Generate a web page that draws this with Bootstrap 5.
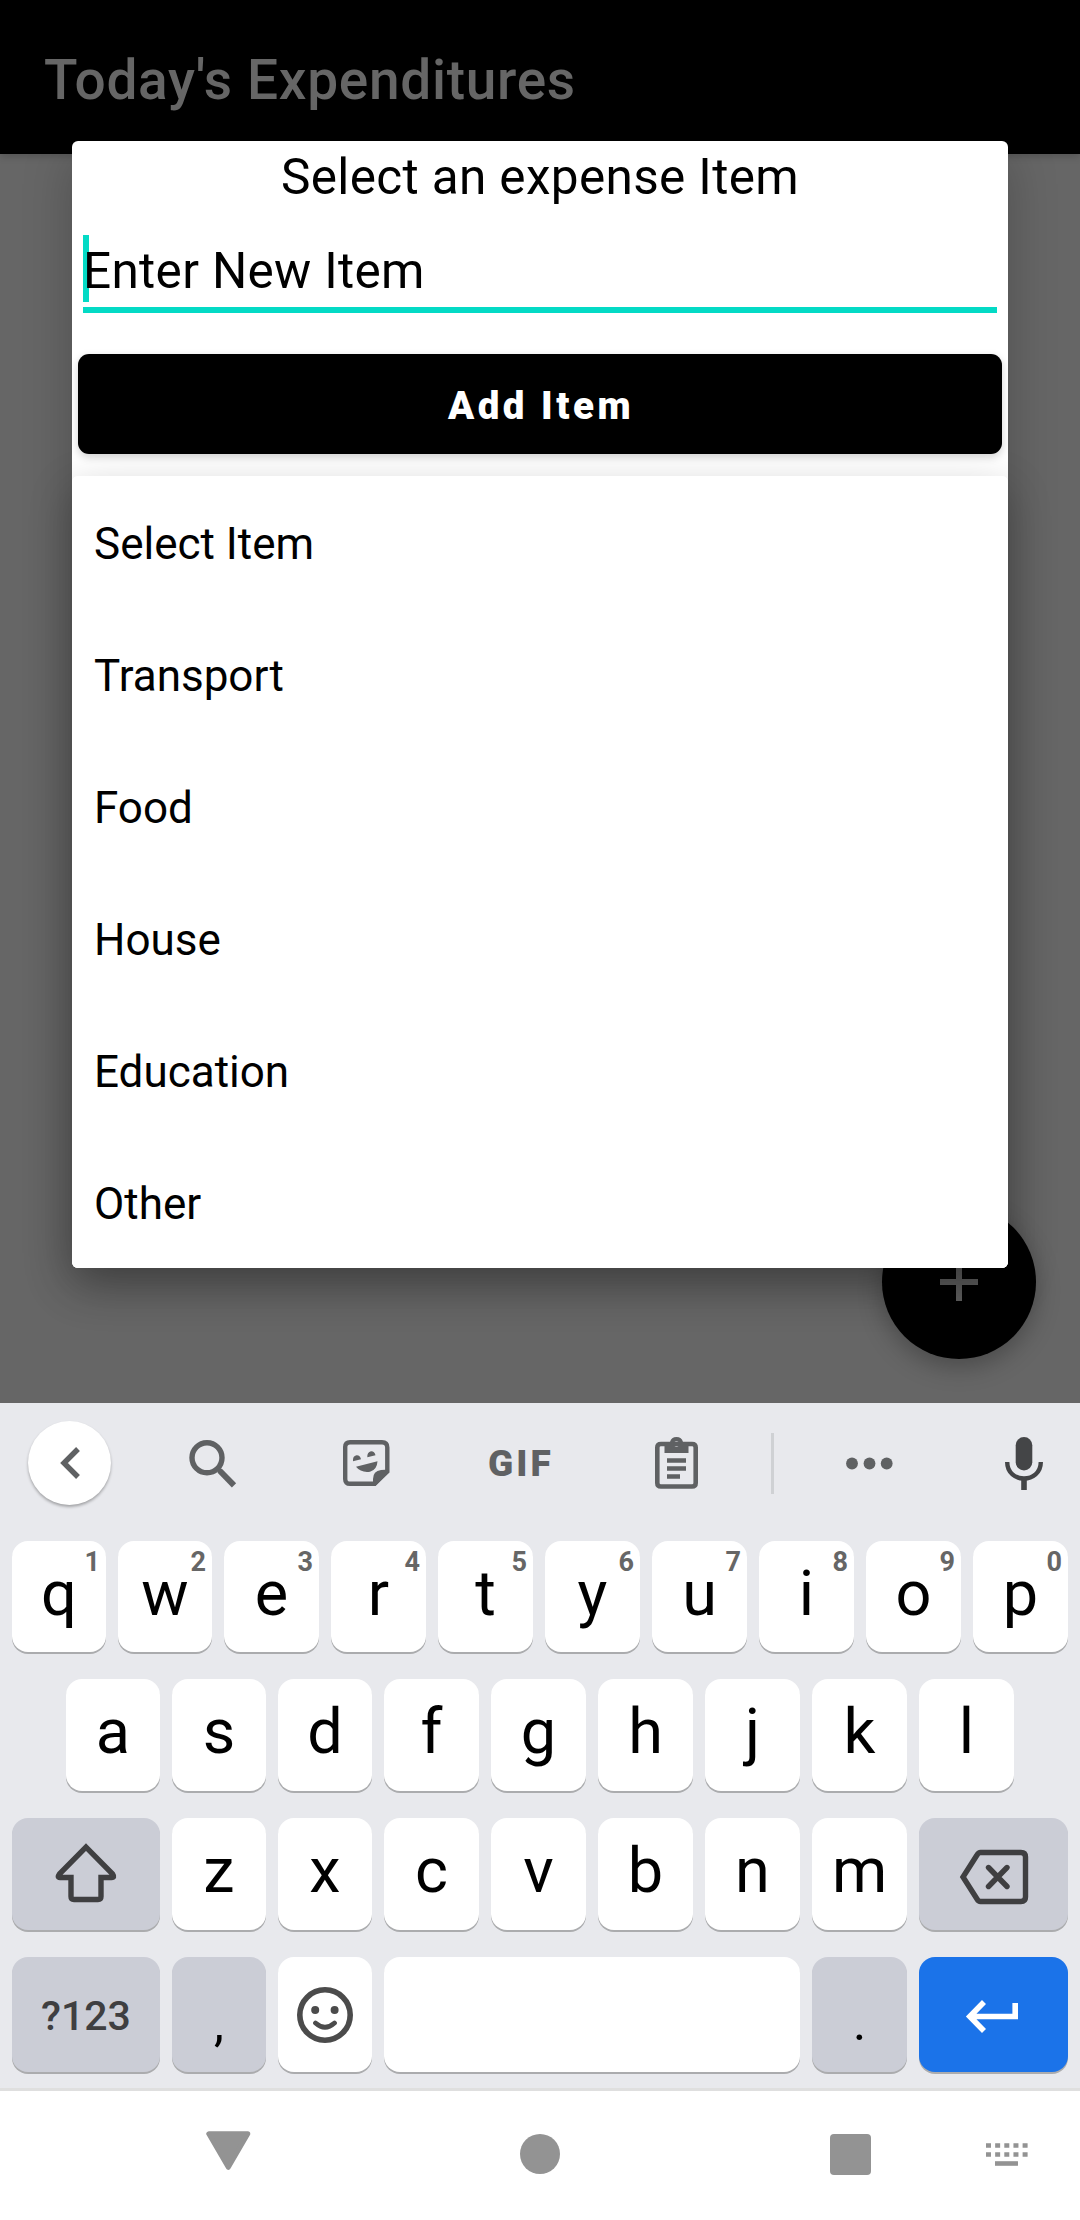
<!DOCTYPE html>
<html lang="en">
<head>
<meta charset="utf-8">
<meta name="viewport" content="width=device-width, initial-scale=1">
<title>Today's Expenditures</title>
<link href="https://cdn.jsdelivr.net/npm/bootstrap@5.3.0/dist/css/bootstrap.min.css" rel="stylesheet">
<style>
  body { font-family: Roboto, "Liberation Sans", sans-serif; color: #000; line-height: 1; overflow: hidden; }
  svg { display: block; flex: none; overflow: visible; }
  .phone { width: 1080px; height: 2220px; }
  .app-area { height: 1403px; background: #666; }
  .topbar { height: 154px; background: #000; padding: 6px 0 0 44px; box-shadow: 0 2px 8px rgba(0,0,0,.2); }
  .topbar-title { font-size: 55px; font-weight: 500; color: #666; letter-spacing: .7px; line-height: 60px; white-space: nowrap; }
  .fab { left: 882px; top: 1205px; width: 154px; height: 154px; background: #000; box-shadow: 0 8px 24px rgba(0,0,0,.28); }
  .dialog-box { left: 72px; top: 141px; width: 936px; height: 1127px; border-radius: 6px; box-shadow: 0 14px 50px rgba(0,0,0,.23); }
  .dialog-heading { font-size: 49.5px; line-height: 58px; padding-top: 7px; letter-spacing: .35px; }
  .entry { margin: 29px 11px 0; height: 78px; border-bottom: 6px solid #03dac5; font-size: 49.5px; line-height: 73px; letter-spacing: .32px; white-space: nowrap; }
  .caret { left: 0; top: 0; width: 6px; height: 67px; background: #03dac5; }
  .btn-add { margin: 41px 6px 22px; height: 100px; border-radius: 11px; background: #000; color: #fff; font-size: 38.5px; font-weight: 900; letter-spacing: 3.5px; line-height: 1; box-shadow: 0 3px 8px rgba(0,0,0,.18); padding: 4px 0 0 2px; border: 0; }
  .dropdown-panel { border-radius: 6px; box-shadow: 0 14px 44px rgba(0,0,0,.24); background: #fff; }
  .choice { height: 132px; padding: 4px 22px 0; font-size: 44px; border: 0; color: #000; }
  .keyboard { background: #e8e9ed; height: 688px; border-bottom: 3px solid #dfdfdf; }
  .tools { height: 120px; padding-left: 28px; margin-bottom: 18px; color: #5f6163; }
  .back-circle { width: 83px; height: 84px; background: #fff; box-shadow: 0 2px 3px rgba(0,0,0,.3); }
  .t-search { margin-left: 78px; } .t-sticker { margin-left: 107px; } .t-gif { margin-left: 98px; width: 64px; }
  .t-clip { margin-left: 103px; } .t-rule { margin-left: 73px; width: 3px; height: 61px; background: #cfd1d4; }
  .t-dots { margin-left: 72px; } .t-mic { margin-left: 112px; }
  .gif-text { font-size: 37px; font-weight: 900; letter-spacing: 3px; line-height: 37px; }
  .keyrow { height: 112px; margin: 0 12px 27px; gap: 12px; }
  .keyrow-top { height: 111px; }
  .keyrow-mid { margin-left: 66px; margin-right: 66px; }
  .keyrow-last { height: 115px; margin-bottom: 0; }
  .keycap { flex: 1 1 0; min-width: 0; height: 100%; background: #fff; border-radius: 16px; box-shadow: 0 2px 0 #abacae; font-size: 63px; line-height: 105px; text-align: center; position: relative; }
  .keycap sup { position: absolute; right: 6px; top: 5px; font-size: 27px; line-height: 32px; font-weight: 700; color: #666; }
  .k-gray { background: #cbcdd6; color: #3f3f41; }
  .k-slim { flex: 0 0 94px; }
  .k-wide { flex: 0 0 148px; }
  .k-wider { flex: 0 0 149px; }
  .k-space { flex: 0 0 416px; }
  .k-enter { background: #1b73e9; }
  .k-mode { font-size: 41px; font-weight: 500; line-height: 119px; }
  .k-punct { color: #000; font-size: 50px; line-height: 132px; }
  .i-shift { margin-bottom: 2px; } .i-del { margin-top: 5px; } .i-enter { margin: 4px 3px 0 0; }
  .navkeys { height: 129px; color: #939393; }
  .n-back { margin-left: 206px; margin-top: 40px; } .n-home { margin-left: 269px; margin-top: 43px; }
  .n-recent { margin-left: 270px; margin-top: 43px; } .n-kbd { margin-left: 115px; margin-top: 52px; }
</style>
<script src="https://cdn.jsdelivr.net/npm/bootstrap@5.3.0/dist/js/bootstrap.bundle.min.js"></script>
</head>
<body>
<div class="phone d-flex flex-column overflow-hidden">
  <main class="app-area position-relative flex-shrink-0 overflow-hidden">
    <header class="topbar d-flex align-items-center"><span class="topbar-title">Today's Expenditures</span></header>
    <div class="fab rounded-circle position-absolute d-flex align-items-center justify-content-center">
      <svg width="38" height="38" viewBox="0 0 38 38" stroke="#606060" stroke-width="6"><path d="M19 0V38M0 19H38"/></svg>
    </div>
    <section class="dialog-box position-absolute bg-white d-flex flex-column">
      <div class="dialog-heading text-center">Select an expense Item</div>
      <div class="entry position-relative"><span class="caret position-absolute"></span><span class="position-relative">Enter New Item</span></div>
      <button class="btn btn-add flex-shrink-0" type="button">Add Item</button>
      <div class="dropdown-panel list-group position-relative">
        <div class="choice list-group-item d-flex align-items-center">Select Item</div>
        <div class="choice list-group-item d-flex align-items-center">Transport</div>
        <div class="choice list-group-item d-flex align-items-center">Food</div>
        <div class="choice list-group-item d-flex align-items-center">House</div>
        <div class="choice list-group-item d-flex align-items-center">Education</div>
        <div class="choice list-group-item d-flex align-items-center">Other</div>
      </div>
    </section>
  </main>

  <section class="keyboard flex-shrink-0">
    <div class="tools d-flex align-items-center">
      <div class="back-circle rounded-circle d-flex align-items-center justify-content-center">
        <svg width="20" height="32" viewBox="0 0 20 32" fill="none" stroke="currentColor" stroke-width="5.4"><path d="M18 2L4 16L18 30"/></svg>
      </div>
      <svg class="t-search" width="47" height="47" viewBox="0 0 47 47" fill="none" stroke="currentColor"><circle cx="18" cy="17.7" r="15" stroke-width="5.4"/><path d="M30.5 30.5L45 45.3" stroke-width="6"/><path d="M27 27L32 32" stroke-width="4"/></svg>
      <svg class="t-sticker" width="47" height="46" viewBox="0 0 47 46"><path d="M7 2.2H39Q44.300 2.200 44.300 7.500V31.500L31.500 43.800H7Q2.200 43.800 2.200 39V7Q2.200 2.200 7 2.200Z" fill="none" stroke="currentColor" stroke-width="4.400"/><path d="M30 45V39Q30 31 38 30L46 29.500V32L32.500 46Z" fill="currentColor"/><path d="M13 26.800L34.500 21.300Q34 30 27 31.700Q18 33 13 26.800ZM10 21.300Q9.500 16 13.500 15.300Q17 15 18 19.200ZM24.300 17.200Q24 12 28 11.200Q31.500 11 32.500 15.200Z" fill="currentColor"/></svg>
      <div class="t-gif"><span class="gif-text">GIF</span></div>
      <svg class="t-clip" width="43" height="52" viewBox="0 0 43 52"><path d="M6 7H37Q40.700 7 40.700 10.500V46Q40.700 49.500 37 49.500H6Q2.300 49.500 2.300 46V10.500Q2.300 7 6 7Z" fill="none" stroke="currentColor" stroke-width="4.600"/><path fill="currentColor" fill-rule="evenodd" d="M9.500 5H15A6.700 6.700 0 0 1 28 5H33.500V16H9.500ZM21.500 4.300A2.700 2.700 0 1 0 21.500 9.700A2.700 2.700 0 1 0 21.500 4.300Z"/><path d="M12 23.500H31M12 31.500H31M12 39.500H25" stroke="currentColor" stroke-width="4.700"/></svg>
      <div class="t-rule"></div>
      <svg class="t-dots" width="47" height="12" viewBox="0 0 47 12" fill="currentColor"><circle cx="6" cy="6.500" r="5.900"/><circle cx="23.500" cy="6.500" r="5.900"/><circle cx="40.700" cy="6.500" r="5.900"/></svg>
      <svg class="t-mic" width="38" height="53" viewBox="0 0 38 53"><g color="#444547"><rect x="10.700" y="0" width="16.600" height="33.500" rx="8.300" fill="currentColor"/><path d="M2.200 25C2.200 47 35.800 47 35.800 25" fill="none" stroke="currentColor" stroke-width="4.400"/><path d="M19 41V53" stroke="currentColor" stroke-width="5.600"/></g></svg>
    </div>

    <div class="keyrow keyrow-top d-flex">
      <div class="keycap k-slim">q<sup>1</sup></div><div class="keycap k-slim">w<sup>2</sup></div><div class="keycap">e<sup>3</sup></div><div class="keycap">r<sup>4</sup></div><div class="keycap">t<sup>5</sup></div><div class="keycap">y<sup>6</sup></div><div class="keycap">u<sup>7</sup></div><div class="keycap">i<sup>8</sup></div><div class="keycap">o<sup>9</sup></div><div class="keycap">p<sup>0</sup></div>
    </div>
    <div class="keyrow keyrow-mid d-flex">
      <div class="keycap k-slim">a</div><div class="keycap k-slim">s</div><div class="keycap k-slim">d</div><div class="keycap">f</div><div class="keycap">g</div><div class="keycap">h</div><div class="keycap">j</div><div class="keycap">k</div><div class="keycap">l</div>
    </div>
    <div class="keyrow d-flex">
      <div class="keycap k-gray k-wide d-flex align-items-center justify-content-center">
        <svg class="i-shift" width="62" height="60" viewBox="0 0 62 60" fill="none" stroke="currentColor" stroke-width="5.400"><path d="M31 4.200L57.600 31Q60 34.500 56.500 34.500H46V53.500Q46 56.500 43 56.500H19Q16 56.500 16 53.500V34.500H5Q1.800 34.500 4.400 31Z"/></svg>
      </div>
      <div class="keycap k-slim">z</div><div class="keycap k-slim">x</div><div class="keycap">c</div><div class="keycap">v</div><div class="keycap">b</div><div class="keycap">n</div><div class="keycap">m</div>
      <div class="keycap k-gray k-wider d-flex align-items-center justify-content-center">
        <svg class="i-del" width="70" height="56" viewBox="0 0 70 56" fill="none" stroke="currentColor" stroke-width="5.400"><path d="M21.500 3.500H62Q66.500 3.500 66.500 8V48Q66.500 52.500 62 52.500H21.500Q19.500 52.500 18 50L4 28L18 6Q19.500 3.500 21.500 3.500Z"/><path d="M29.500 18.500L48 37.500M48 18.500L29.500 37.500" stroke-linecap="round"/></svg>
      </div>
    </div>
    <div class="keyrow keyrow-last d-flex">
      <div class="keycap k-gray k-wide k-mode">?123</div>
      <div class="keycap k-slim k-gray k-punct">,</div>
      <div class="keycap k-slim d-flex align-items-center justify-content-center">
        <svg width="56" height="56" viewBox="0 0 56 56" fill="none" stroke="#4b4b4b" stroke-width="5.600"><circle cx="28" cy="28" r="25.200"/><path d="M18.500 36Q28 44.500 37.500 36" stroke-width="4.800" stroke-linecap="round"/><circle cx="18.200" cy="23" r="4" fill="#4b4b4b" stroke="none"/><circle cx="37.600" cy="23" r="4" fill="#4b4b4b" stroke="none"/></svg>
      </div>
      <div class="keycap k-space"></div>
      <div class="keycap k-gray k-punct">.</div>
      <div class="keycap k-enter k-wider d-flex align-items-center justify-content-center">
        <svg class="i-enter" width="52" height="33" viewBox="0 0 52 33" fill="none" stroke="#fff" stroke-width="5.600"><path d="M49.200 3V16.500H4M18 2L3.800 16.500L18 31"/></svg>
      </div>
    </div>
  </section>

  <nav class="navkeys d-flex align-items-start bg-white flex-shrink-0">
    <svg class="n-back" width="45" height="39" viewBox="0 0 45 39" fill="currentColor" stroke="currentColor" stroke-width="5" stroke-linejoin="round"><path d="M2.800 2.800H41.800L22.300 36.300Z"/></svg>
    <svg class="n-home" width="40" height="40" viewBox="0 0 40 40" fill="currentColor"><circle cx="20" cy="20" r="20"/></svg>
    <svg class="n-recent" width="41" height="41" viewBox="0 0 41 41" fill="currentColor"><rect width="41" height="41" rx="4"/></svg>
    <svg class="n-kbd" width="42" height="23" viewBox="0 0 42 23" stroke="currentColor" stroke-width="4.600"><path d="M0 2.500H42M0 11.500H42" stroke-dasharray="5 4.150"/><path d="M9 20.500H32"/></svg>
  </nav>
</div>
</body>
</html>
